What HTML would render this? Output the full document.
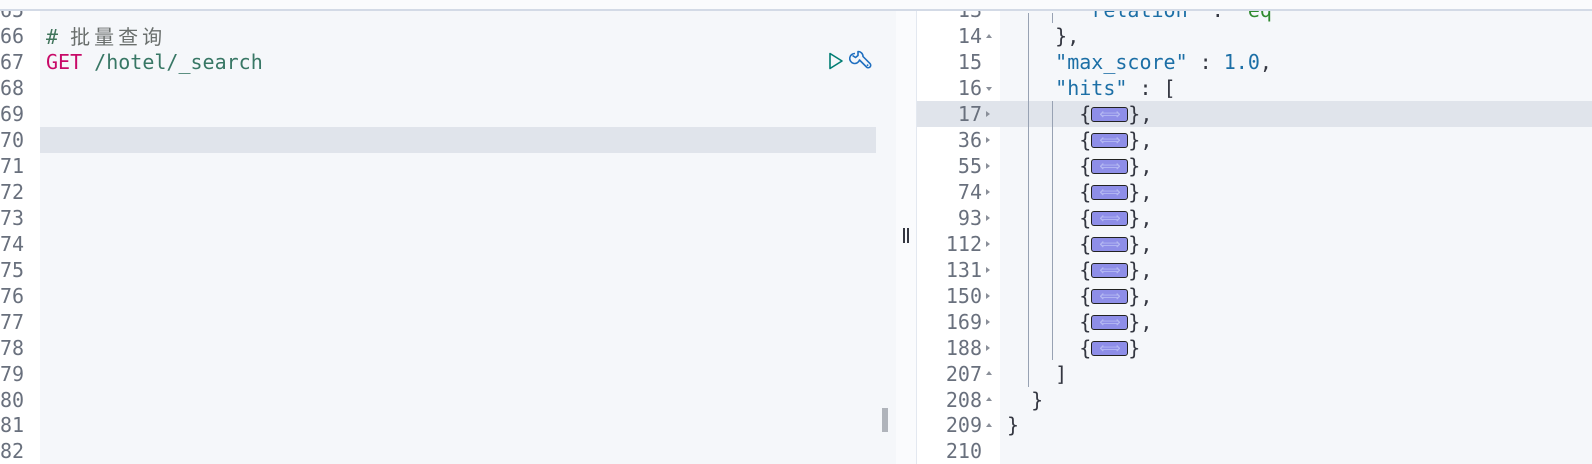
<!DOCTYPE html>
<html><head><meta charset="utf-8"><style>
*{margin:0;padding:0;box-sizing:border-box}
body{width:1592px;height:464px;overflow:hidden;background:#f5f7fa;position:relative;font-family:"DejaVu Sans Mono","Liberation Mono","Noto Sans CJK SC",monospace;font-size:20px;color:#343741}
.topbar{position:absolute;left:0;top:0;width:1592px;height:11px;background:#fafbfd;border-bottom:2px solid #d3dae6;z-index:5}
.lg{position:absolute;left:0;top:0;width:40px;height:464px;background:#fff}
.led{position:absolute;left:40px;top:0;width:856px;height:464px;background:#f5f7fa}
.split{position:absolute;left:896px;top:0;width:21px;height:464px;background:#fafbfd;border-right:1px solid #e3e8f0}
.rg{position:absolute;left:917px;top:0;width:83px;height:464px;background:#fff}
.row{position:absolute;height:26px;line-height:26px;white-space:pre}
.ln{color:#69707d}
.hl{position:absolute;height:26px;background:#e0e4eb}
.ph{display:inline-block;width:37px;height:15px;background:#8e8ee8;border:1.5px solid #222;border-radius:3px;vertical-align:-1px;position:relative}
.ph:after{content:"⟺";position:absolute;left:7px;top:-7px;font-size:15px;color:#b4b8f2}
.ar{position:absolute;left:986px;width:0;height:0}
.up{border-left:3.5px solid transparent;border-right:3.5px solid transparent;border-bottom:4px solid #8a8f99}
.dn{border-left:3.5px solid transparent;border-right:3.5px solid transparent;border-top:4px solid #8a8f99}
.rt{border-top:3.5px solid transparent;border-bottom:3.5px solid transparent;border-left:4px solid #8a8f99}
.guide{position:absolute;width:1px;background:#98a2b3}
.k{color:#1c6fa6}
.s{color:#2f8a2f}
.c{display:inline-block;width:24px;text-align:left;font-family:"Noto Sans CJK SC",sans-serif;font-size:20px;color:#6a6f6d}
.rn{left:900px;width:82px;text-align:right}
</style></head><body>
<div class="topbar"></div>
<div class="lg"></div>
<div class="led"></div>
<div class="hl" style="left:40px;width:836px;top:127px"></div>
<div class="split"></div>
<div class="rg"></div>
<div class="hl" style="left:917px;width:675px;top:101px"></div>
<div style="position:absolute;left:903px;top:228px;width:2px;height:15px;background:#343741"></div>
<div style="position:absolute;left:907px;top:228px;width:2px;height:15px;background:#343741"></div>
<div style="position:absolute;left:882px;top:408px;width:6px;height:24px;background:#b0b4bb"></div>

<div class="row ln" style="left:0;top:-2.75px">65</div>
<div class="row ln" style="left:0;top:23.2px">66</div>
<div class="row ln" style="left:0;top:49.15px">67</div>
<div class="row ln" style="left:0;top:75.1px">68</div>
<div class="row ln" style="left:0;top:101.05px">69</div>
<div class="row ln" style="left:0;top:127px">70</div>
<div class="row ln" style="left:0;top:152.95px">71</div>
<div class="row ln" style="left:0;top:178.9px">72</div>
<div class="row ln" style="left:0;top:204.85px">73</div>
<div class="row ln" style="left:0;top:230.8px">74</div>
<div class="row ln" style="left:0;top:256.75px">75</div>
<div class="row ln" style="left:0;top:282.7px">76</div>
<div class="row ln" style="left:0;top:308.65px">77</div>
<div class="row ln" style="left:0;top:334.6px">78</div>
<div class="row ln" style="left:0;top:360.55px">79</div>
<div class="row ln" style="left:0;top:386.5px">80</div>
<div class="row ln" style="left:0;top:412.45px">81</div>
<div class="row ln" style="left:0;top:438.4px">82</div>

<div class="row" style="left:46px;top:23.2px;color:#41755c"># <span class="c">批</span><span class="c">量</span><span class="c">查</span><span class="c">询</span></div>
<div class="row" style="left:46px;top:49.15px;color:#387765"><span style="color:#c80a68">GET</span> /hotel/_search</div>

<svg style="position:absolute;left:827px;top:51px" width="18" height="20" viewBox="0 0 18 20"><path d="M3 2.5 L15 10 L3 17.5 Z" fill="none" stroke="#017d73" stroke-width="1.6" stroke-linejoin="round"/></svg>
<svg style="position:absolute;left:849px;top:50px" width="26" height="24" viewBox="0 0 26 24"><path d="M6 3.5 A5 5 0 1 0 10.5 10 L17.5 17 A2.4 2.4 0 0 0 21 13.6 L14 6.5 A5 5 0 0 0 9 1.5 L9 5.5 L6.5 7.5 L3.5 5.5" fill="none" stroke="#1f6fc0" stroke-width="1.6" stroke-linejoin="round"/><circle cx="18.6" cy="15.2" r="0.9" fill="#1f6fc0"/></svg>

<div class="guide" style="left:1028px;top:13px;height:374px"></div>
<div class="guide" style="left:1052px;top:101px;height:259px"></div>
<div class="guide" style="left:1052px;top:13px;height:10px"></div>

<div class="row ln rn" style="top:-2.75px">13</div>
<div class="row ln rn" style="top:23.2px">14</div>
<div class="row ln rn" style="top:49.15px">15</div>
<div class="row ln rn" style="top:75.1px">16</div>
<div class="row ln rn" style="top:101.05px">17</div>
<div class="row ln rn" style="top:127px">36</div>
<div class="row ln rn" style="top:152.95px">55</div>
<div class="row ln rn" style="top:178.9px">74</div>
<div class="row ln rn" style="top:204.85px">93</div>
<div class="row ln rn" style="top:230.8px">112</div>
<div class="row ln rn" style="top:256.75px">131</div>
<div class="row ln rn" style="top:282.7px">150</div>
<div class="row ln rn" style="top:308.65px">169</div>
<div class="row ln rn" style="top:334.6px">188</div>
<div class="row ln rn" style="top:360.55px">207</div>
<div class="row ln rn" style="top:386.5px">208</div>
<div class="row ln rn" style="top:412.45px">209</div>
<div class="row ln rn" style="top:438.4px">210</div>

<div class="ar up" style="top:34px"></div>
<div class="ar dn" style="top:87px"></div>
<div class="ar rt" style="top:111px"></div>
<div class="ar rt" style="top:137px"></div>
<div class="ar rt" style="top:163px"></div>
<div class="ar rt" style="top:189px"></div>
<div class="ar rt" style="top:215px"></div>
<div class="ar rt" style="top:241px"></div>
<div class="ar rt" style="top:267px"></div>
<div class="ar rt" style="top:293px"></div>
<div class="ar rt" style="top:319px"></div>
<div class="ar rt" style="top:345px"></div>
<div class="ar up" style="top:371px"></div>
<div class="ar up" style="top:397px"></div>
<div class="ar up" style="top:423px"></div>

<div class="row" style="left:1007px;top:-2.75px">      <span class="k">"relation"</span> : <span class="s">"eq"</span></div>
<div class="row" style="left:1007px;top:23.2px">    },</div>
<div class="row" style="left:1007px;top:49.15px">    <span class="k">"max_score"</span> : <span class="k">1.0</span>,</div>
<div class="row" style="left:1007px;top:75.1px">    <span class="k">"hits"</span> : [</div>
<div class="row" style="left:1007px;top:101.05px">      {<span class="ph"></span>},</div>
<div class="row" style="left:1007px;top:127px">      {<span class="ph"></span>},</div>
<div class="row" style="left:1007px;top:152.95px">      {<span class="ph"></span>},</div>
<div class="row" style="left:1007px;top:178.9px">      {<span class="ph"></span>},</div>
<div class="row" style="left:1007px;top:204.85px">      {<span class="ph"></span>},</div>
<div class="row" style="left:1007px;top:230.8px">      {<span class="ph"></span>},</div>
<div class="row" style="left:1007px;top:256.75px">      {<span class="ph"></span>},</div>
<div class="row" style="left:1007px;top:282.7px">      {<span class="ph"></span>},</div>
<div class="row" style="left:1007px;top:308.65px">      {<span class="ph"></span>},</div>
<div class="row" style="left:1007px;top:334.6px">      {<span class="ph"></span>}</div>
<div class="row" style="left:1007px;top:360.55px">    ]</div>
<div class="row" style="left:1007px;top:386.5px">  }</div>
<div class="row" style="left:1007px;top:412.45px">}</div>
</body></html>
